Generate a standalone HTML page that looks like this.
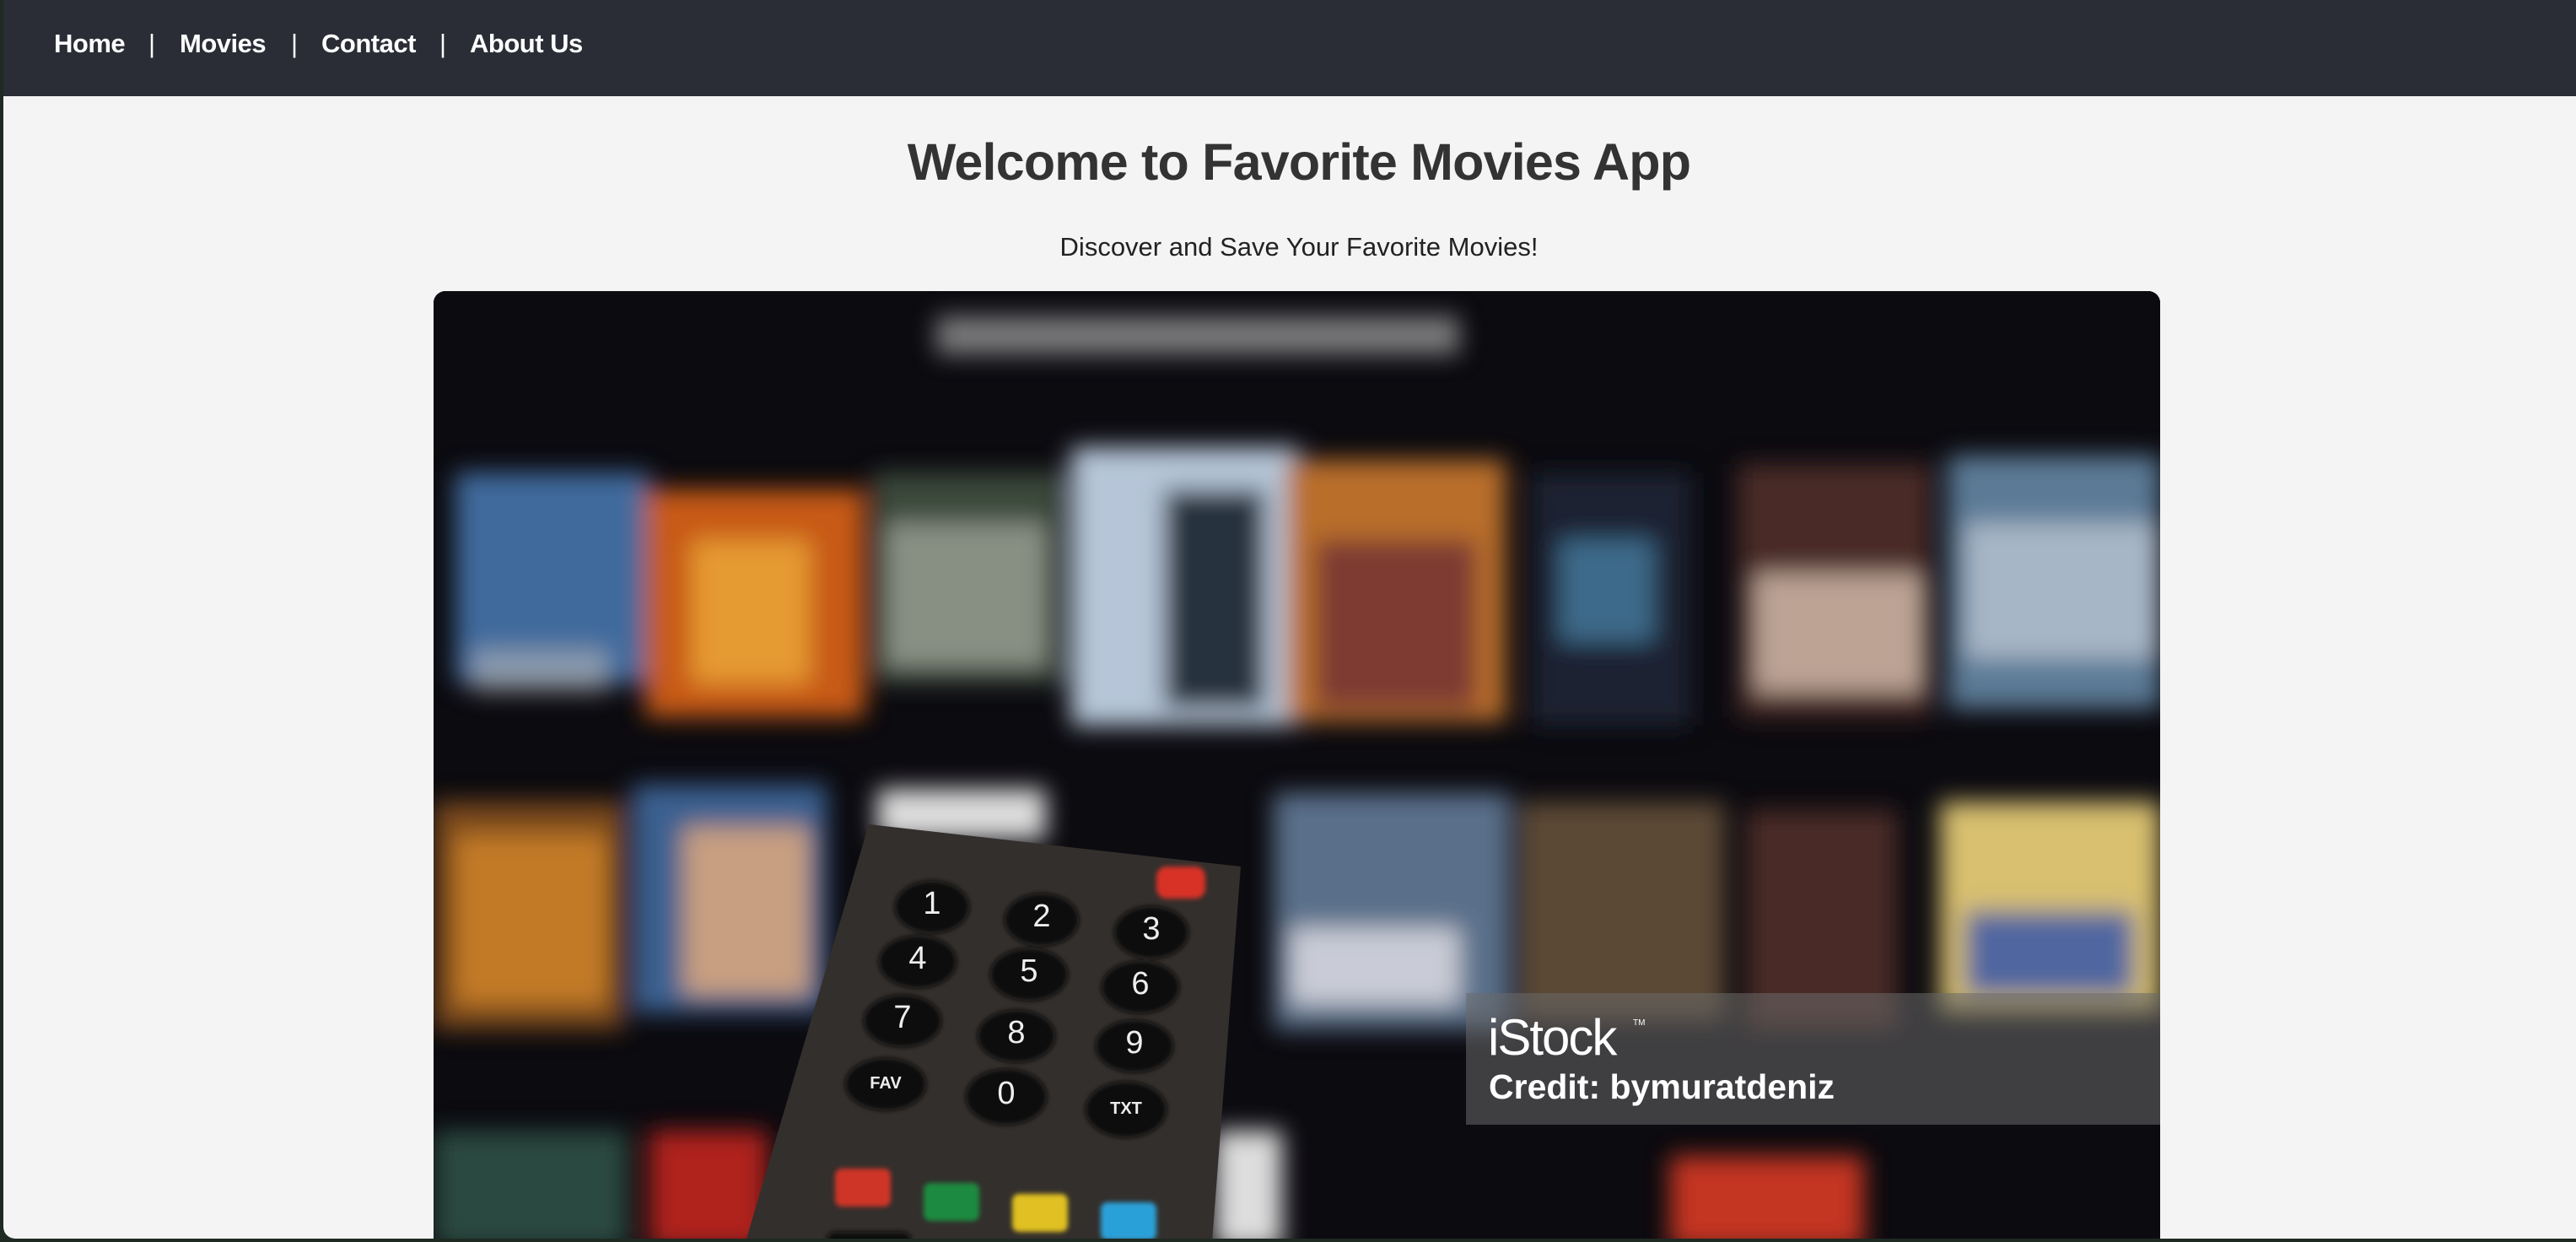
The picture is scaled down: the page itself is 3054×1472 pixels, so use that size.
<!DOCTYPE html>
<html><head><meta charset="utf-8"><style>
html,body{margin:0;padding:0;width:3054px;height:1472px;overflow:hidden;background:#1e2a22;font-family:"Liberation Sans",Arial,sans-serif;}
.win{position:absolute;left:4px;top:0;width:3050px;height:1468px;background:#f4f4f4;border-bottom-left-radius:14px;overflow:hidden}
nav{position:absolute;left:0;top:0;width:3054px;height:114px;background:#2a2d35;}
nav span{position:absolute;top:34px;font-size:31px;font-weight:bold;color:#fff;letter-spacing:-0.5px}
h1{position:absolute;left:0;width:3072px;top:157px;margin:0;text-align:center;font-size:61px;font-weight:bold;color:#333;letter-spacing:-0.8px}
p.sub{position:absolute;left:0;width:3072px;top:275px;margin:0;text-align:center;font-size:31px;color:#222}
.img{position:absolute;left:510px;top:345px;width:2047px;height:1140px;border-radius:14px;overflow:hidden;background:#0b0a10}
</style></head><body>
<div class="win">
<nav>
<span style="left:60px">Home</span>
<span style="left:172px;font-weight:normal">|</span>
<span style="left:209px">Movies</span>
<span style="left:341px;font-weight:normal">|</span>
<span style="left:377px">Contact</span>
<span style="left:517px;font-weight:normal">|</span>
<span style="left:553px">About Us</span>
</nav>
<h1>Welcome to Favorite Movies App</h1>
<p class="sub">Discover and Save Your Favorite Movies!</p>
<div class="img">
<svg width="2047" height="1140" viewBox="514 345 2047 1140" xmlns="http://www.w3.org/2000/svg">
<defs><filter id="b" x="-10%" y="-10%" width="120%" height="120%"><feGaussianBlur stdDeviation="14"/></filter>
<filter id="s"><feGaussianBlur stdDeviation="3"/></filter></defs>
<rect x="514" y="345" width="2047" height="1140" fill="#0c0b10"/>
<g filter="url(#b)">
<rect x="1110" y="375" width="620" height="45" fill="#aaa" opacity="0.7"/>
<rect x="540" y="560" width="230" height="250" fill="#3f6a9c"/>
<rect x="560" y="770" width="160" height="50" fill="#bbb" opacity="0.6"/>
<rect x="765" y="580" width="260" height="270" fill="#c75a18"/>
<rect x="820" y="640" width="140" height="170" fill="#e69a30"/>
<rect x="1035" y="560" width="225" height="250" fill="#3a4a3a"/>
<rect x="1050" y="620" width="190" height="170" fill="#c9c9c0" opacity="0.55"/>
<rect x="1270" y="530" width="270" height="330" fill="#b6c6d8"/>
<rect x="1380" y="580" width="120" height="260" fill="#28303c"/>
<rect x="1525" y="545" width="260" height="310" fill="#b96e2c"/>
<rect x="1560" y="640" width="190" height="200" fill="#7d3a30"/>
<rect x="1815" y="560" width="190" height="300" fill="#1f2430"/>
<rect x="1850" y="640" width="110" height="120" fill="#3c6a8a"/>
<rect x="2060" y="550" width="230" height="300" fill="#4a2a26"/>
<rect x="2080" y="680" width="200" height="140" fill="#d8c2b0" opacity="0.8"/>
<rect x="2310" y="540" width="251" height="300" fill="#5c7a96"/>
<rect x="2330" y="620" width="230" height="160" fill="#a7b6c6"/>
<rect x="514" y="950" width="225" height="270" fill="#7a4a1a"/>
<rect x="540" y="990" width="180" height="200" fill="#c27a25"/>
<rect x="750" y="930" width="230" height="270" fill="#3a6090"/>
<rect x="810" y="980" width="150" height="200" fill="#c89f80"/>
<rect x="1040" y="935" width="200" height="60" fill="#ddd"/>
<rect x="1510" y="940" width="280" height="280" fill="#5a6f8a"/>
<rect x="1530" y="1100" width="200" height="90" fill="#c9ccd6"/>
<rect x="1800" y="950" width="245" height="260" fill="#5b4a36"/>
<rect x="2070" y="960" width="180" height="260" fill="#4a2c26"/>
<rect x="2300" y="950" width="261" height="250" fill="#d8c070"/>
<rect x="2330" y="1080" width="200" height="100" fill="#5066a0"/>
<rect x="514" y="1340" width="230" height="140" fill="#2a4a40"/>
<rect x="1980" y="1370" width="230" height="110" fill="#c43420"/>
<rect x="1440" y="1340" width="80" height="140" fill="#ddd"/>
<rect x="770" y="1340" width="140" height="140" fill="#b0201e"/>
</g>
<polygon points="1030,977 1471,1027 1436,1485 880,1485" fill="#332f2c"/>
<g filter="url(#s)">
<g fill="#111">
<ellipse cx="1105" cy="1075" rx="44" ry="31"/><ellipse cx="1235" cy="1090" rx="44" ry="31"/><ellipse cx="1365" cy="1105" rx="44" ry="31"/>
<ellipse cx="1088" cy="1140" rx="46" ry="31"/><ellipse cx="1220" cy="1155" rx="46" ry="31"/><ellipse cx="1352" cy="1170" rx="46" ry="31"/>
<ellipse cx="1070" cy="1210" rx="46" ry="31"/><ellipse cx="1205" cy="1228" rx="46" ry="31"/><ellipse cx="1345" cy="1240" rx="46" ry="31"/>
<ellipse cx="1050" cy="1285" rx="48" ry="31"/><ellipse cx="1193" cy="1300" rx="48" ry="33"/><ellipse cx="1335" cy="1315" rx="48" ry="33"/>
<rect x="980" y="1460" width="100" height="30" rx="10"/><rect x="1120" y="1475" width="100" height="20" rx="10"/>
</g>
<rect x="1371" y="1027" width="58" height="38" rx="12" fill="#d83028"/>
<rect x="990" y="1385" width="66" height="45" rx="8" fill="#cf3428"/>
<rect x="1095" y="1402" width="66" height="45" rx="8" fill="#1c8a40"/>
<rect x="1200" y="1415" width="66" height="45" rx="8" fill="#e0c020"/>
<rect x="1305" y="1425" width="66" height="45" rx="8" fill="#2aa0d8"/>
</g>
<g fill="#eee" font-family="Liberation Sans,sans-serif" font-size="38" text-anchor="middle">
<text x="1105" y="1083">1</text><text x="1235" y="1098">2</text><text x="1365" y="1113">3</text>
<text x="1088" y="1148">4</text><text x="1220" y="1163">5</text><text x="1352" y="1178">6</text>
<text x="1070" y="1218">7</text><text x="1205" y="1236">8</text><text x="1345" y="1248">9</text>
<text x="1050" y="1290" font-size="20" font-weight="bold">FAV</text><text x="1193" y="1308">0</text><text x="1335" y="1320" font-size="20" font-weight="bold">TXT</text>
</g>
<rect x="1738" y="1177" width="823" height="156" fill="#6a6a6a" opacity="0.55"/>
<text x="1764" y="1250" fill="#fff" font-family="Liberation Sans,sans-serif" font-size="60" letter-spacing="-2">iStock</text>
<text x="1936" y="1215" fill="#fff" font-family="Liberation Sans,sans-serif" font-size="10">TM</text>
<text x="1765" y="1302" fill="#fff" font-family="Liberation Sans,sans-serif" font-size="41" font-weight="bold">Credit: bymuratdeniz</text>
</svg>
</div>
</div>
</body></html>
